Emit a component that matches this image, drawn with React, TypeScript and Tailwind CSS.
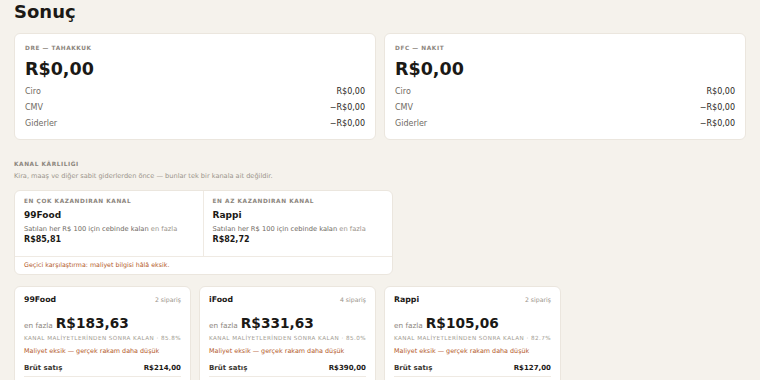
const font = "font-['DejaVu_Sans',sans-serif]";

const summaries = [
  { title: "DRE — TAHAKKUK", total: "R$0,00" },
  { title: "DFC — NAKIT", total: "R$0,00" },
];

const channels = [
  { name: "99Food", orders: "2 sipariş", value: "R$183,63", pct: "85.8%", gross: "R$214,00" },
  { name: "iFood", orders: "4 sipariş", value: "R$331,63", pct: "85.0%", gross: "R$390,00" },
  { name: "Rappi", orders: "2 sipariş", value: "R$105,06", pct: "82.7%", gross: "R$127,00" },
];

const label = "text-[5.8px] leading-[8px] font-bold tracking-[0.1em] text-[#8b857c]";

function SummaryCard({ title, total }: { title: string; total: string }) {
  return (
    <div className="bg-white rounded-md border border-[#ebe6de] px-[10px] pt-[10px] pb-[7px]">
      <div className={label}>{title}</div>
      <div className="text-[17.5px] leading-[20px] font-bold text-[#1b1916] mt-[7px]">{total}</div>
      <div className="mt-[5px] text-[8px] text-[#6f6a63]">
        <div className="flex justify-between h-[16px] items-center">
          <span>Ciro</span>
          <span className="text-[#2a2723]">R$0,00</span>
        </div>
        <div className="flex justify-between h-[16px] items-center">
          <span>CMV</span>
          <span className="text-[#2a2723]">−R$0,00</span>
        </div>
        <div className="flex justify-between h-[16px] items-center">
          <span>Giderler</span>
          <span className="text-[#2a2723]">−R$0,00</span>
        </div>
      </div>
    </div>
  );
}

function Extreme({ title, name, value }: { title: string; name: string; value: string }) {
  return (
    <div className="px-[9px] pt-[6px] pb-[10px]">
      <div className={label}>{title}</div>
      <div className="text-[9px] leading-[12px] font-bold text-[#1b1916] mt-[4px]">{name}</div>
      <div className="text-[6.7px] leading-[10px] text-[#6f6a63] mt-[3px] whitespace-nowrap">
        Satılan her R$ 100 için cebinde kalan <span className="text-[#9a948b]">en fazla</span>
      </div>
      <div className="text-[8px] leading-[12px] font-bold text-[#1b1916]">{value}</div>
    </div>
  );
}

export default function App() {
  return (
    <main className={`${font} bg-[#f5f2ec] w-[760px] h-[380px] overflow-hidden px-[14px]`}>
      <h1 className="text-[18px] font-bold text-[#1b1916] leading-[23px]">Sonuç</h1>

      <div className="grid grid-cols-2 gap-2 mt-[10px]">
        {summaries.map((s) => (
          <SummaryCard key={s.title} title={s.title} total={s.total} />
        ))}
      </div>

      <div className={`mt-[20px] ${label}`}>KANAL KÂRLILIĞI</div>
      <div className="text-[6.6px] leading-[10px] text-[#9a948b] mt-[3px]">
        Kira, maaş ve diğer sabit giderlerden önce — bunlar tek bir kanala ait değildir.
      </div>

      <div className="w-[379px] bg-white rounded-md border border-[#ebe6de] mt-[9px]">
        <div className="grid grid-cols-2 divide-x divide-[#efeae3] border-b border-[#efeae3]">
          <Extreme title="EN ÇOK KAZANDIRAN KANAL" name="99Food" value="R$85,81" />
          <Extreme title="EN AZ KAZANDIRAN KANAL" name="Rappi" value="R$82,72" />
        </div>
        <div className="px-[9px] pt-[3px] pb-[4px] text-[6.3px] leading-[10px] text-[#b45a2a]">
          Geçici karşılaştırma: maliyet bilgisi hâlâ eksik.
        </div>
      </div>

      <div className="grid grid-cols-4 gap-2 mt-[11px]">
        {channels.map((c) => (
          <div key={c.name} className="bg-white rounded-md border border-[#ebe6de] px-[9px] pt-[7px] h-[120px]">
            <div className="flex justify-between items-center h-[12px]">
              <span className="text-[7.8px] font-bold text-[#1b1916]">{c.name}</span>
              <span className="text-[6.2px] text-[#9a948b]">{c.orders}</span>
            </div>
            <div className="flex items-baseline gap-[3px] mt-[8px] h-[18px] leading-[18px]">
              <span className="text-[7.3px] text-[#8b857c]">en fazla</span>
              <span className="text-[13.7px] font-bold text-[#1b1916]">{c.value}</span>
            </div>
            <div className="text-[5.65px] leading-[8px] tracking-[0.08em] text-[#a39d94] mt-[2px] whitespace-nowrap">
              KANAL MALİYETLERİNDEN SONRA KALAN · {c.pct}
            </div>
            <div className="text-[6.4px] leading-[10px] text-[#b45a2a] mt-[4px]">Maliyet eksik — gerçek rakam daha düşük</div>
            <div className="flex justify-between items-center mt-[7px] h-[14px] pb-[3px] border-b border-[#efeae3] text-[7px] font-bold text-[#3a3631]">
              <span>Brüt satış</span>
              <span className="text-[#1b1916]">{c.gross}</span>
            </div>
          </div>
        ))}
      </div>
    </main>
  );
}
